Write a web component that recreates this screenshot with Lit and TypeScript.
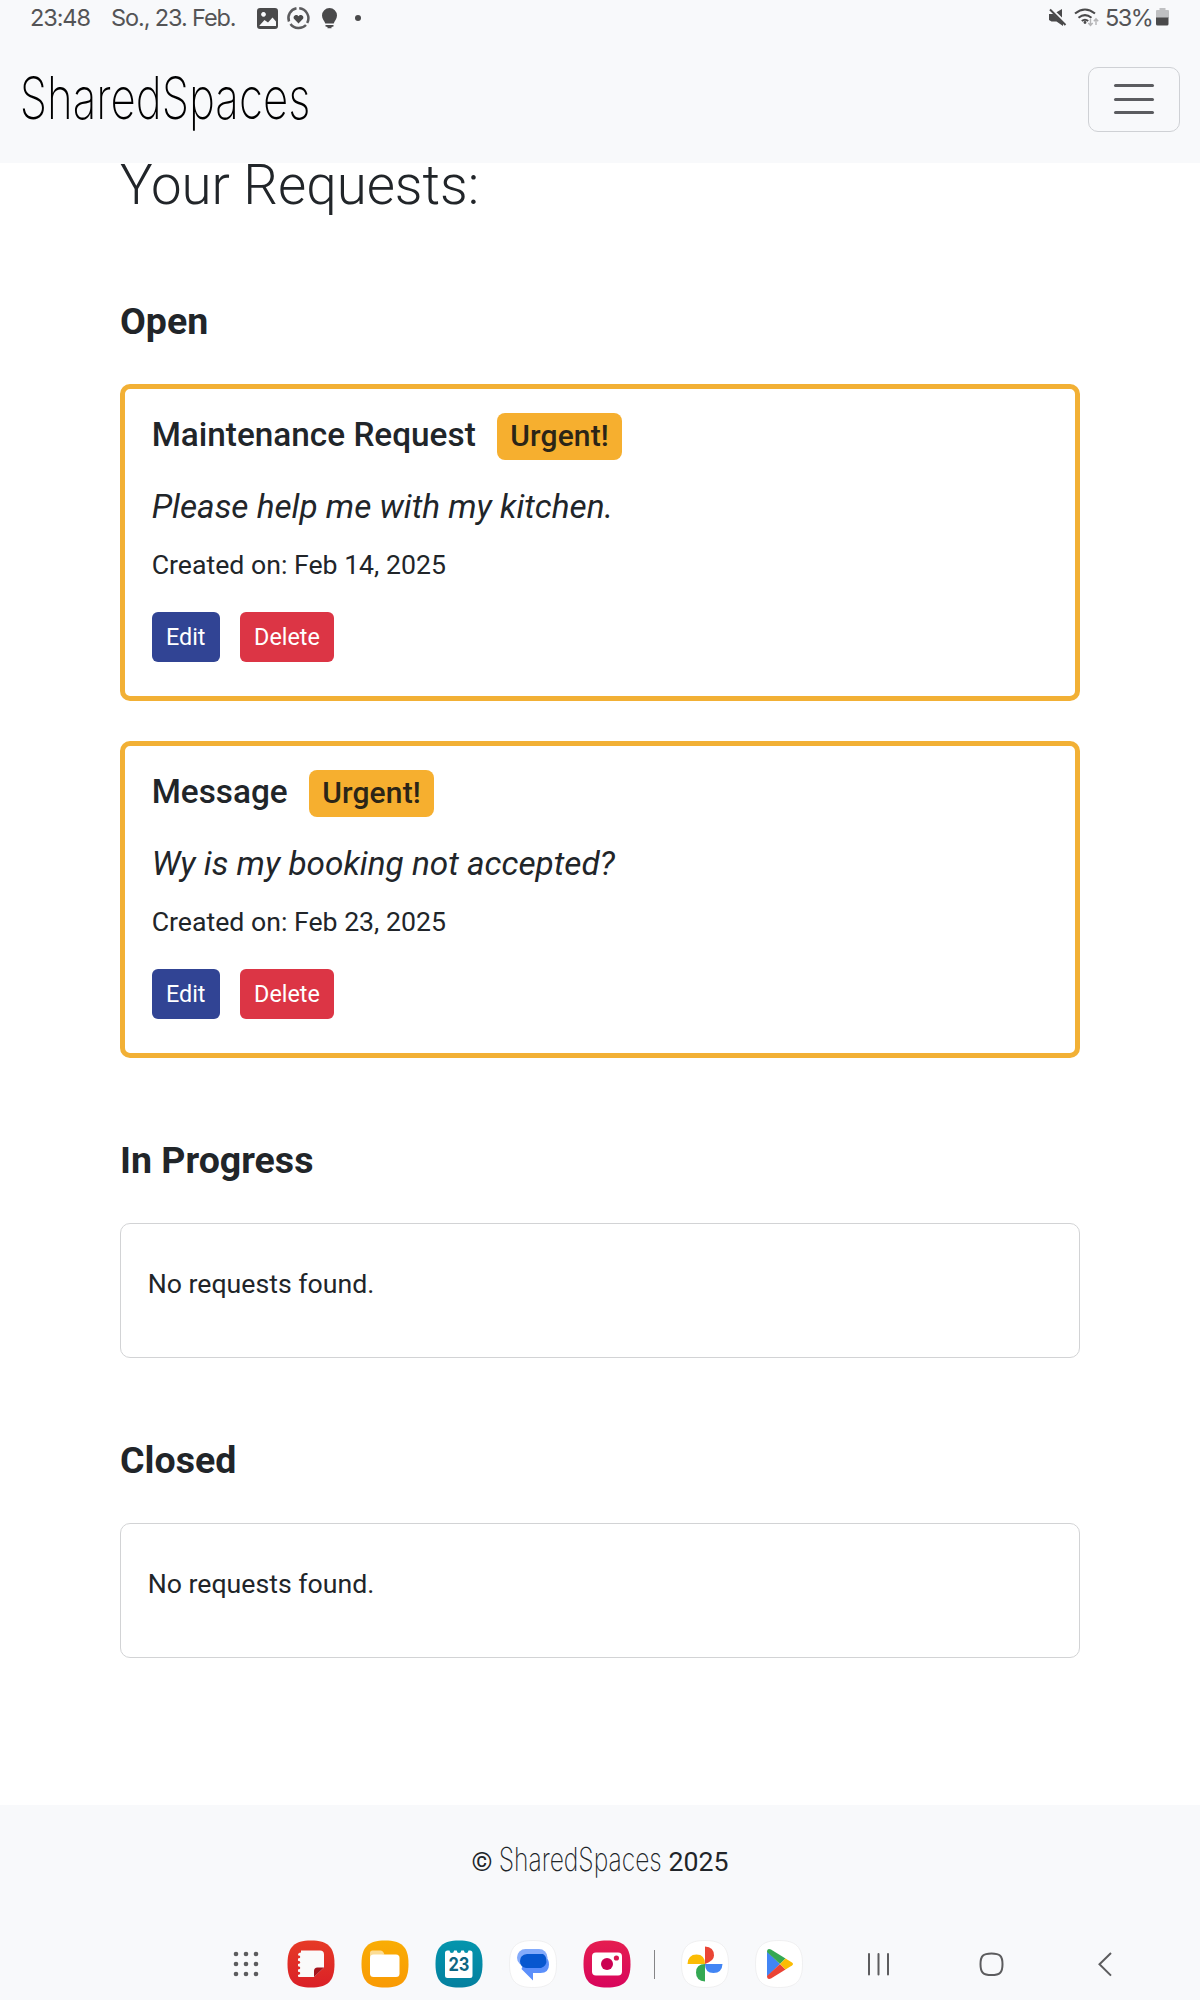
import { LitElement, html, css, svg } from "lit";
import { customElement, property } from "lit/decorators.js";

@customElement("status-bar")
class StatusBar extends LitElement {
  static styles = css`
    :host { display: flex; align-items: center; height: 36px; padding: 0 31px 0 30px; color: #545456;
      font: 400 23.500px/36px Inter, "Open Sans", sans-serif; white-space: pre; }
    .time { width: 81px; letter-spacing: -1.100px; }
    .date { width: 146px; letter-spacing: -1.100px; }
    .spacer { flex: 1; }
    .battery-text { letter-spacing: -1.500px; width: 51px; margin-left: 6px; }
    svg { display: block; flex: none; }
  `;
  render() {
    return html`
      <span class="time">23:48</span><span class="date">So., 23. Feb.</span>
      <svg width="106" height="36" viewBox="257 0 106 36">
        <path fill="#4a4a4b" fill-rule="evenodd" d="M260 8h15q3 0 3 3v15q0 3-3 3h-15q-3 0-3-3V11q0-3 3-3zM263.500 12a2.400 2.400 0 1 0 .01 0zM259.500 25.500l5-5.500 3.500 2.500 4.500-5 3.500 4v4.500h-16.500z"/>
        <g fill="none" stroke="#5c5c5e" stroke-width="2.500">
          <path d="M296.500 8.300a10 10 0 0 0-7.500 13.200M290.500 24a10.200 10.200 0 0 0 15.500 1M307.200 23a10 10 0 0 0-8-14.700"/>
        </g>
        <path fill="#4a4a4b" d="M298.500 23.500l-4.300-4.500c-2.200-2.700 2.200-6 4.300-2.800 2.100-3.200 6.500.1 4.300 2.800z"/>
        <path fill="#4a4a4b" d="M329.500 8a7.500 7.500 0 0 1 7.500 7.500c0 3.500-2.300 5-3.300 8h-8.400c-1-3-3.300-4.500-3.300-8a7.500 7.500 0 0 1 7.500-7.500zM325.500 25h8v1.500l-2 .5v1.300h-4V27l-2-.5z"/>
        <circle cx="358" cy="18" r="3" fill="#4a4a4b"/>
      </svg>
      <span class="spacer"></span>
      <svg width="50" height="36" viewBox="1049 0 50 36">
        <path fill="#4a4a4b" d="M1062 9v8.500l-5.500-5.200zM1049 14h4.500l9.500 9v3l-6.500-4.500h-5l-2.500-1.500z"/>
        <path d="M1050 9.500l15.500 15.500" stroke="#4a4a4b" stroke-width="2"/>
        <g fill="none" stroke="#4a4a4b" stroke-width="2.100">
          <path d="M1075 13.500q10-8 20 0M1078.500 17.700q6.500-5.200 13 0M1081.800 21q3.200-2.500 6.400 0"/>
        </g>
        <circle cx="1085" cy="22.500" r="1.400" fill="#4a4a4b"/>
        <path d="M1090.500 19v6.500m-2.200-2.500l2.200 2.500 2.200-2.500M1096 25v-6m-2.200 2.300l2.200-2.500 2.200 2.500" fill="none" stroke="#b4b4b6" stroke-width="1.400"/>
      </svg>
      <span class="battery-text">53%</span>
      <svg width="13" height="36" viewBox="0 0 13 36">
        <path fill="#bfc0c2" d="M3.500 8h6v2H12q1 0 1 1v7H0v-7q0-1 1-1h2.500z"/>
        <path fill="#4a4a4b" d="M0 17.500h12.500V24q0 1.500-1.500 1.500H1.500Q0 25.500 0 24z"/>
      </svg>`;
  }
}

@customElement("brand-name")
class BrandName extends LitElement {
  @property({ type: Number }) width = 287;
  @property({ type: Number }) size = 57;
  static styles = css`
    :host { display: inline-block; }
    svg { display: block; overflow: visible; }
    text { font-family: Inter, Roboto, sans-serif; font-weight: 250; font-size: 58.500px; }
  `;
  render() {
    return html`<svg width=${this.width} height=${this.size} viewBox="0 0 287 57">
      <text x="-3" y="43" transform="scale(.79 1)" textLength="368" lengthAdjust="spacingAndGlyphs">SharedSpaces</text>
    </svg>`;
  }
}

@customElement("request-card")
class RequestCard extends LitElement {
  @property() heading = "";
  @property() message = "";
  @property() created = "";
  static styles = css`
    :host { display: block; box-sizing: border-box; height: 317px; padding: 24px 26.7px; border: 5px solid #f2b035; border-radius: 10px; }
    .head { display: flex; align-items: flex-start; gap: 21px; height: 47px; }
    .title { margin-top: 2px; font-size: 33.33px; line-height: 40px; font-weight: 500; }
    .badge { font-size: 30px; line-height: 30px; font-weight: 500; padding: 8px 13.500px 9px; border-radius: 8px; background: #f6af2f; color: #2b2517; letter-spacing: .15px; }
    .message { margin-top: 22px; font-size: 33.33px; line-height: 50px; font-style: italic; }
    .created { margin-top: 13px; line-height: 40px; }
    .actions { display: flex; gap: 20px; margin-top: 27px; }
    .btn { height: 50px; padding: 0 14.300px; border: 0; border-radius: 6px; font: 400 23.33px/50px Roboto, sans-serif; color: #fff; }
    .edit { background: #314494; }
    .delete { background: #dc3545; }
  `;
  render() {
    return html`
      <div class="head"><span class="title">${this.heading}</span><span class="badge">Urgent!</span></div>
      <div class="message">${this.message}</div>
      <div class="created">Created on: ${this.created}</div>
      <div class="actions"><button class="btn edit">Edit</button><button class="btn delete">Delete</button></div>`;
  }
}

@customElement("task-bar")
class TaskBar extends LitElement {
  static styles = css`
    :host { display: flex; align-items: center; height: 72px; padding-left: 233px; }
    svg { display: block; flex: none; }
    .apps { display: flex; gap: 26px; margin-left: 28px; }
    .date { font: 700 18.500px Inter, sans-serif; fill: #0c6683; }
    .divider { width: 1.5px; height: 29px; margin: 0 26px 0 22.500px; background: #858587; }
    .pair { display: flex; gap: 26px; }
    .nav { margin-left: 64px; }
  `;
  private tile(fill: string, body: unknown, edge = "none") {
    return html`<svg width="48" height="48" viewBox="0 0 48 48">
      <defs>
        <linearGradient id="red" x2="0" y2="1"><stop stop-color="#e63a26"/><stop offset="1" stop-color="#da2027"/></linearGradient>
        <linearGradient id="amber" x2="0" y2="1"><stop stop-color="#f9ad05"/><stop offset="1" stop-color="#f99a04"/></linearGradient>
        <linearGradient id="teal" x2="0" y2="1"><stop stop-color="#0495ad"/><stop offset="1" stop-color="#04809f"/></linearGradient>
        <linearGradient id="pink" x2="0" y2="1"><stop stop-color="#e51e50"/><stop offset="1" stop-color="#d8055c"/></linearGradient>
      </defs>
      <path fill=${fill} stroke=${edge} stroke-width=".8" d="M24 .5C41 .5 47.500 7 47.500 24S41 47.500 24 47.500.5 41 .5 24 7 .5 24 .5z"/>${body}</svg>`;
  }
  render() {
    return html`
      <svg width="26" height="28" viewBox="0 0 26 28" fill="#5c5c5e">
        ${[4, 14, 24].map((y) => [3, 13, 23].map((x) => svg`<circle cx=${x} cy=${y} r="2.300"/>`))}
      </svg>
      <div class="apps">
        ${this.tile("url(#red)", svg`<path fill="#fafafa" d="M14 10.500h19q4 0 4 4V27.500l-10 9.500H12q-1.500 0-1-2 2.500-.5 2.300-2-.3-1.300-2.300-1.300v-2.200q2.300-.2 2.300-1.600t-2.300-1.700v-2.200q2.300-.2 2.300-1.600t-2.300-1.700v-2.200q2.300-.2 2.300-1.600t-2.300-1.700q0-2.700 3-2.700z"/><path fill="#a5141c" d="M37 27.500L27 37v-6q0-3.500 3.500-3.500z"/>`)}
        ${this.tile("url(#amber)", svg`<path fill="#fcdc93" d="M9 17v-4q0-2.500 2.500-2.500h8q2 0 3 2l1 2z"/><rect x="9" y="14.500" width="29.500" height="22.500" rx="3.500" fill="#fff"/>`)}
        ${this.tile("url(#teal)", svg`<path fill="#fff" d="M12.500 10.500h2q.3 2.500 2.300 2.500t2.300-2.500h2.600q.3 2.500 2.300 2.500t2.300-2.500h2.600q.3 2.500 2.300 2.500t2.300-2.500h1.500q2.500 0 2.500 2.500v22.500q0 2.500-2.500 2.500h-22.500q-2.500 0-2.500-2.500V13q0-2.500 2.500-2.500z"/><text class="date" x="24" y="31" text-anchor="middle" textLength="21" lengthAdjust="spacingAndGlyphs">23</text>`)}
        ${this.tile("#fff", svg`<path fill="#5b8ffb" d="M17 17h20q3 2.500 3 7.500 0 8.500-8.500 8.500H24v7.500L12.500 29z"/><rect x="8" y="9" width="30.500" height="17" rx="8.500" fill="#84abfb"/><path fill="#0757cf" d="M18 14h16q3.500 2 3.500 7t-5.500 7H17q-6-1-6-7t7-7z"/>`, "#ececee")}
        ${this.tile("url(#pink)", svg`<rect x="9" y="12.500" width="30" height="23" rx="4" fill="#fff"/><circle cx="24" cy="24" r="6" fill="#cb0052"/><circle cx="33.400" cy="18" r="2.600" fill="#d8164f"/>`)}
      </div>
      <div class="divider"></div>
      <div class="pair">
        ${this.tile("#fff", svg`<path fill="#ea4535" d="M24 24V6.500q9 .5 9 9 0 5.500-9 8.500z"/><path fill="#4285f4" d="M24 24h17.500q-.5 9-9 9T24 24z"/><path fill="#34a853" d="M24 24v17.500q-9-.5-9-9t9-8.500z"/><path fill="#fbbc04" d="M24 24H6.500q.5-9.500 9-9.500T24 24z"/>`, "#ececee")}
        ${this.tile("#fff", svg`<path fill="#4285f4" d="M12 11.500v25L25 24z"/><path fill="#34a853" d="M12 12q0-4 4-2.500l14.500 9L25 24z"/><path fill="#ea4335" d="M12 36q0 4 4 2.500l14.500-9L25 24z"/><path fill="#fbbc04" d="M30.500 18.500l6.500 4q2 1.500 0 3l-6.500 4L25 24z"/>`, "#ececee")}
      </div>
      <svg class="nav" width="250" height="28" viewBox="867 1950 250 28" fill="none" stroke="#5c5c5e" stroke-width="2">
        <path stroke-linecap="round" d="M869 1954v20.500M878.500 1954v20.500M888 1954v20.500"/>
        <path d="M991.500 1953.500c8.500 0 11 2.500 11 10.800s-2.500 10.800-11 10.800-11-2.500-11-10.800 2.500-10.800 11-10.800z"/>
        <path d="M1111 1953l-11.500 11.300 11.500 11.300"/>
      </svg>`;
  }
}

@customElement("app-root")
class AppRoot extends LitElement {
  static styles = css`
    :host { display: flex; flex-direction: column; width: 1200px; height: 2000px; overflow: hidden; background: #fff;
      color: #212529; font: 400 26.67px/40px Roboto, sans-serif; }
    header { height: 163px; flex: none; background: #f8f9fb; }
    .navbar { display: flex; justify-content: space-between; align-items: flex-start; padding: 31px 20px 0 22px; }
    .brand { fill: #000; margin-top: 9px; }
    .toggler { box-sizing: border-box; width: 92px; height: 65px; padding: 0 0 1px; border: 1px solid #cfd1d5; border-radius: 10px; background: none;
      display: flex; flex-direction: column; align-items: center; justify-content: center; gap: 10.300px; }
    .line { width: 40px; height: 3px; border-radius: 2px; background: #5b5c60; }
    main { flex: 1; padding: 0 120px; margin-top: -10px; }
    h1 { margin: 0 0 82px; font-size: 54.600px; line-height: 64px; font-weight: 300; }
    h2 { margin: 0 0 41px; font-size: 37.500px; line-height: 44px; font-weight: 700; }
    section { margin-bottom: 80px; }
    .cards { display: flex; flex-direction: column; gap: 40px; }
    .empty { box-sizing: border-box; height: 135px; padding: 39.600px 26.7px; border: 1px solid #d2d3d5; border-radius: 10px; }
    footer { height: 195px; flex: none; display: flex; flex-direction: column; justify-content: space-between; background: #f8f9fb; }
    .copyright { display: flex; justify-content: center; gap: 7.500px; padding-top: 37px; }
    .small { fill: #212529; margin-top: 4.500px; }
  `;
  render() {
    return html`
      <header>
        <status-bar></status-bar>
        <div class="navbar">
          <brand-name class="brand"></brand-name>
          <button class="toggler" aria-label="Menu"><span class="line"></span><span class="line"></span><span class="line"></span></button>
        </div>
      </header>
      <main>
        <h1>Your Requests:</h1>
        <section>
          <h2>Open</h2>
          <div class="cards">
            <request-card heading="Maintenance Request" message="Please help me with my kitchen." created="Feb 14, 2025"></request-card>
            <request-card heading="Message" message="Wy is my booking not accepted?" created="Feb 23, 2025"></request-card>
          </div>
        </section>
        ${["In Progress", "Closed"].map((name) => html`<section><h2>${name}</h2><div class="empty">No requests found.</div></section>`)}
      </main>
      <footer>
        <div class="copyright"><span>©</span><brand-name class="small" width="161" size="32"></brand-name><span>2025</span></div>
        <task-bar></task-bar>
      </footer>`;
  }
}
